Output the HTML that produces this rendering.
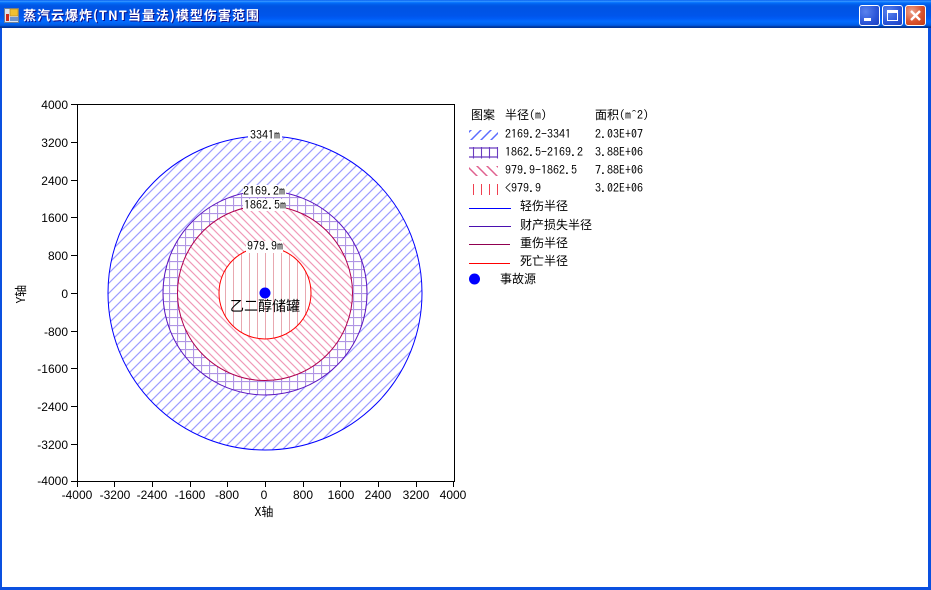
<!DOCTYPE html>
<html><head><meta charset="utf-8"><style>
html,body{margin:0;padding:0;width:931px;height:590px;overflow:hidden;background:#fff}
#w{position:absolute;left:0;top:0;width:931px;height:590px;background:#fff;overflow:hidden}
#tb{position:absolute;left:0;top:0;width:931px;height:28px;background:linear-gradient(#0058ee 0,#3593ff 4%,#288eff 6%,#127dff 8%,#036ffc 10%,#0262ee 14%,#0057e5 20%,#0054e3 24%,#0055eb 56%,#005bf5 66%,#026afe 76%,#0062ef 86%,#0052d6 92%,#0040ab 94%,#003092 100%)}
.b{position:absolute;background:#0a50e0}
#t{position:absolute;left:23px;top:7px;color:#fff;font:bold 13px/16px "WenQuanYi Zen Hei","Noto Sans CJK SC",sans-serif;letter-spacing:1px;white-space:nowrap;text-shadow:1px 1px 0 #0f1089}
.btn{position:absolute;top:5px;width:19px;height:19px;border:1px solid #fff;border-radius:3px;background:radial-gradient(circle at 30% 30%,#5a83ee,#2a55d8 60%,#1d3fc0)}
.btn svg{position:absolute;left:0;top:0}
#c{background:radial-gradient(circle at 30% 30%,#eda58f,#d9532f 55%,#c23a12)}
svg text{font-family:"Liberation Sans",sans-serif;font-size:12px;fill:#000}
svg .m{font-family:"IPAGothic","Liberation Mono",monospace}
svg .z{font-family:"WenQuanYi Zen Hei","Noto Sans CJK SC",sans-serif}
</style></head><body><div id="w">
<div id="tb"></div>
<div class="b" style="left:0;top:28px;width:2px;height:562px"></div>
<div class="b" style="left:928px;top:28px;width:3px;height:562px"></div>
<div class="b" style="left:0;top:587px;width:931px;height:3px"></div>
<svg style="position:absolute;left:4px;top:8px" width="16" height="16" viewBox="0 0 16 16"><rect x="0.5" y="0.5" width="14" height="14" fill="#dfe6ee" stroke="#6b7f9a"/><rect x="6" y="1" width="8" height="7" fill="#f0c030" stroke="#b08020" stroke-width=".6"/><rect x="2" y="6" width="3" height="7" fill="#d02818"/><rect x="6" y="9" width="8" height="4" fill="#6f93c8"/></svg>
<div id="t">蒸汽云爆炸(TNT当量法)模型伤害范围</div>
<div class="btn" style="left:859px"><svg width="19" height="19"><rect x="4" y="12" width="7" height="3" fill="#fff"/></svg></div>
<div class="btn" style="left:882px"><svg width="19" height="19"><rect x="4.5" y="4.5" width="10" height="10" fill="none" stroke="#fff"/><rect x="4" y="4" width="11" height="3" fill="#fff"/></svg></div>
<div class="btn" id="c" style="left:905px"><svg width="19" height="19"><path d="M5 5L14 14M14 5L5 14" stroke="#fff" stroke-width="2.4"/></svg></div>

<svg style="position:absolute;left:0;top:0" width="931" height="590" viewBox="0 0 931 590">
<defs>
<pattern id="pb" width="10" height="10" patternUnits="userSpaceOnUse" patternTransform="translate(1 1)"><path d="M-2 2L2 -2M0 10L10 0M8 12L12 8" stroke="#9c9cff" stroke-width="1.2"/></pattern>
<pattern id="pbs" width="10" height="10" patternUnits="userSpaceOnUse" patternTransform="translate(1 0)"><path d="M-2 2L2 -2M0 10L10 0M8 12L12 8" stroke="#5a6cff" stroke-width="1.5"/></pattern>
<pattern id="pg" width="8" height="8" patternUnits="userSpaceOnUse" patternTransform="translate(1 5)"><path d="M0.5 0V8M0 0.5H8" stroke="#b095e4" stroke-width="1.2"/></pattern>
<pattern id="pr" width="8" height="8" patternUnits="userSpaceOnUse"><path d="M-2 6L2 10M0 0L8 8M6 -2L10 2" stroke="#f09ab8" stroke-width="1.2"/></pattern>
<pattern id="prs" width="10" height="10" patternUnits="userSpaceOnUse" patternTransform="translate(1 0)"><path d="M-2 8L2 12M0 0L10 10M8 -2L12 2" stroke="#e0608f" stroke-width="1.5"/></pattern>
<pattern id="pv" width="8" height="8" patternUnits="userSpaceOnUse" patternTransform="translate(1 0)"><path d="M0.5 0V8" stroke="#e8a8b0" stroke-width="1"/></pattern>
</defs>
<circle cx="265" cy="293" r="157" fill="#fff"/><circle cx="265" cy="293" r="157" fill="url(#pb)" stroke="#0000ff"/>
<circle cx="265" cy="293" r="102" fill="#fff"/><circle cx="265" cy="293" r="102" fill="url(#pg)" stroke="#5a14c0"/>
<circle cx="265" cy="293" r="87.5" fill="#fff"/><circle cx="265" cy="293" r="87.5" fill="url(#pr)" stroke="#b00050"/>
<circle cx="265" cy="293" r="46" fill="#fff"/><circle cx="265" cy="293" r="46" fill="url(#pv)" stroke="#ff0000"/>
<rect x="248" y="129" width="34" height="12" fill="#fff"/><rect x="243" y="185" width="43" height="12" fill="#fff"/><rect x="243" y="199" width="43" height="12" fill="#fff"/><rect x="246" y="241" width="37" height="12" fill="#fff"/>
<text x="265" y="139" text-anchor="middle" class="m">3341m</text>
<text x="264" y="195" text-anchor="middle" class="m">2169.2m</text>
<text x="265" y="209" text-anchor="middle" class="m">1862.5m</text>
<text x="265" y="250" text-anchor="middle" class="m">979.9m</text>
<circle cx="265" cy="293" r="5.5" fill="#0000ff"/>
<text x="265" y="311" text-anchor="middle" class="z" style="font-size:14px">乙二醇储罐</text>

<rect x="77.5" y="104.5" width="377" height="377" fill="none" stroke="#000"/>
<path d="M71 104.5h6M71 142.5h6M71 180.5h6M71 217.5h6M71 255.5h6M71 293.5h6M71 331.5h6M71 368.5h6M71 406.5h6M71 444.5h6M71 481.5h6M77.5 482v5M114.5 482v5M152.5 482v5M190.5 482v5M227.5 482v5M265.5 482v5M303.5 482v5M340.5 482v5M378.5 482v5M416.5 482v5M453.5 482v5" stroke="#000" fill="none"/>
<g text-anchor="end">
<text x="68" y="109">4000</text><text x="68" y="147">3200</text><text x="68" y="185">2400</text><text x="68" y="222">1600</text><text x="68" y="260">800</text><text x="68" y="298">0</text><text x="68" y="336">-800</text><text x="68" y="373">-1600</text><text x="68" y="411">-2400</text><text x="68" y="449">-3200</text><text x="68" y="485">-4000</text>
</g>
<g text-anchor="middle">
<text x="77" y="499">-4000</text><text x="115" y="499">-3200</text><text x="152" y="499">-2400</text><text x="190" y="499">-1600</text><text x="227" y="499">-800</text><text x="264" y="499">0</text><text x="303" y="499">800</text><text x="341" y="499">1600</text><text x="378" y="499">2400</text><text x="416" y="499">3200</text><text x="453" y="499">4000</text>
</g>
<text x="264" y="516" text-anchor="middle" class="z">X轴</text>
<text transform="translate(25 294) rotate(-90)" text-anchor="middle" class="z">Y轴</text>

<text x="471" y="119" class="z">图案</text><text x="505" y="119" class="z">半径<tspan class="m">(m)</tspan></text><text x="595" y="119" class="z">面积<tspan class="m">(m^2)</tspan></text>
<rect x="469" y="130" width="29" height="10" fill="url(#pbs)"/>
<path d="M469 148H498M469 157H498" stroke="#6a3cc0" stroke-width="1.2"/><path d="M473.5 147V158.5M481.5 147V158.5M489.5 147V158.5M497.5 147V158.5" stroke="#6a3cc0" stroke-width="1.1"/>
<rect x="469" y="166" width="29" height="10" fill="url(#prs)"/>
<path d="M473.5 184V195M481.5 184V195M489.5 184V195M497.5 184V195" stroke="#f04050"/>
<g><text x="505" y="138" class="m">2169.2-3341</text><text x="595" y="138" class="m">2.03E+07</text>
<text x="505" y="156" class="m">1862.5-2169.2</text><text x="595" y="156" class="m">3.88E+06</text>
<text x="505" y="174" class="m">979.9-1862.5</text><text x="595" y="174" class="m">7.88E+06</text>
<text x="505" y="192" class="m">&lt;979.9</text><text x="595" y="192" class="m">3.02E+06</text></g>
<path d="M469 208.5H511" stroke="#0000ff"/><path d="M469 226.5H511" stroke="#4a10b0"/><path d="M469 244.5H510" stroke="#900050"/><path d="M469 263.5H510" stroke="#ff0000"/>
<text x="520" y="210" class="z">轻伤半径</text><text x="520" y="229" class="z">财产损失半径</text><text x="520" y="247" class="z">重伤半径</text><text x="520" y="265" class="z">死亡半径</text>
<circle cx="474.5" cy="279" r="5.5" fill="#0000ff"/><text x="500" y="283" class="z">事故源</text>
</svg>
</div></body></html>
